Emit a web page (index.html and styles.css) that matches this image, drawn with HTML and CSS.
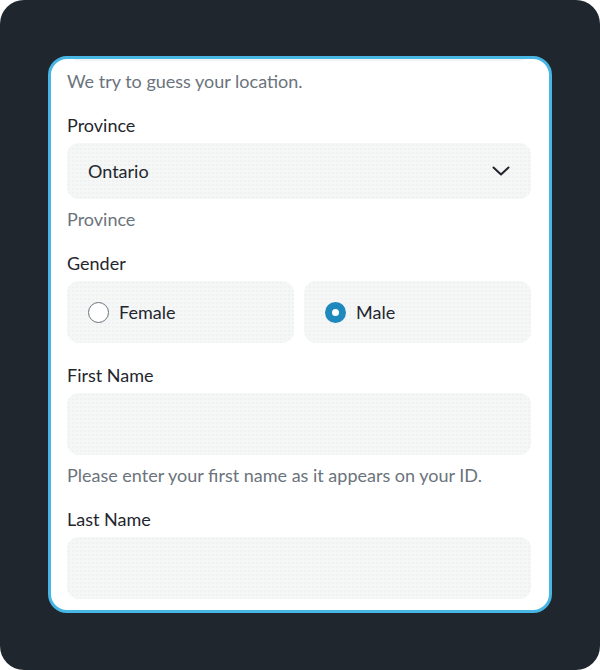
FILE: index.html
```html
<!DOCTYPE html>
<html lang="en">
<head>
<meta charset="utf-8">
<title>Form</title>
<link rel="stylesheet" href="styles.css">
</head>
<body>
<main class="screen">
  <section class="card">
    <div class="content">
      <div class="group">
        <div class="field field-clipped"></div>
        <p class="helper">We try to guess your location.</p>
      </div>
      <div class="group">
        <label class="label">Province</label>
        <div class="field select">
          <span class="value">Ontario</span>
          <svg class="chevron" width="18" height="10" viewBox="0 0 18 10" aria-hidden="true">
            <path d="M1.5 1.5 L9 8.5 L16.5 1.5" fill="none" stroke="#1f262e" stroke-width="2" stroke-linecap="round" stroke-linejoin="round"/>
          </svg>
        </div>
        <p class="helper">Province</p>
      </div>
      <div class="group">
        <label class="label">Gender</label>
        <div class="radios">
          <div class="field radio-box">
            <span class="radio"></span>
            <span class="value">Female</span>
          </div>
          <div class="field radio-box">
            <span class="radio checked"></span>
            <span class="value">Male</span>
          </div>
        </div>
      </div>
      <div class="group">
        <label class="label">First Name</label>
        <div class="field input"></div>
        <p class="helper">Please enter your first name as it appears on your ID.</p>
      </div>
      <div class="group">
        <label class="label">Last Name</label>
        <div class="field input"></div>
      </div>
    </div>
  </section>
</main>
</body>
</html>
```

FILE: styles.css
```css
* { box-sizing: border-box; }

html, body {
  margin: 0;
  padding: 0;
  background: #ffffff;
}

body {
  font-family: Lato, "Open Sans", sans-serif;
  font-size: 18px;
  line-height: 24px;
  color: #1f262e;
}

.screen {
  width: 600px;
  height: 670px;
  background: #1f262e;
  border-radius: 24px;
  padding: 56px 48px 0 48px;
}

.card {
  width: 504px;
  height: 557px;
  background: #ffffff;
  border: 3px solid #47b6e4;
  border-radius: 19px;
  overflow: hidden;
  padding: 0 18px 0 16px;
}

.content {
  display: flex;
  flex-direction: column;
  gap: 20px;
}

.group {
  display: flex;
  flex-direction: column;
}

.label {
  margin-bottom: 6px;
  color: #1f262e;
}

.helper {
  margin: 8px 0 0 0;
  color: #6b737c;
}

.field {
  background-color: #f5f6f6;
  background-image: radial-gradient(circle, rgba(0, 0, 0, 0.02) 0.7px, transparent 0.9px);
  background-size: 4px 4px;
  border-radius: 12px;
}

.field-clipped {
  height: 62px;
  margin-top: -60px;
}

.select {
  height: 56px;
  display: flex;
  align-items: center;
  justify-content: space-between;
  padding: 0 21px;
}

.chevron {
  display: block;
}

.radios {
  display: grid;
  grid-template-columns: 1fr 1fr;
  gap: 10px;
}

.radio-box {
  height: 62px;
  display: flex;
  align-items: center;
  gap: 10px;
  padding: 0 21px;
}

.radio {
  width: 21px;
  height: 21px;
  border-radius: 50%;
  border: 1.5px solid #6b737c;
  background: #ffffff;
  flex: none;
}

.radio.checked {
  border: 7px solid #1f88bd;
  background: #ffffff;
}

.input {
  height: 62px;
}
```
